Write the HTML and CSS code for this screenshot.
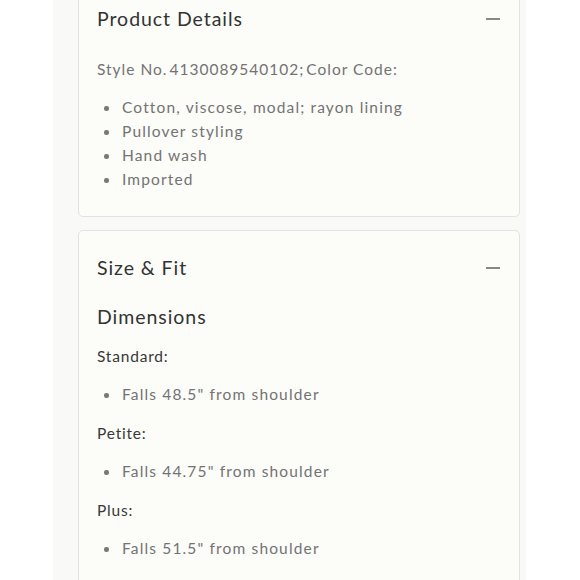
FILE: index.html
```html
<!DOCTYPE html>
<html>
<head>
<meta charset="utf-8">
<link rel="stylesheet" href="styles.css">
</head>
<body>
<div class="band">
  <section class="card first">
    <div class="card-head">
      <h2 class="title">Product Details</h2>
      <span class="minus"></span>
    </div>
    <p class="style-no">Style No.&#8202;4130089540102;&#8202;Color Code:</p>
    <ul class="bullets">
      <li>Cotton, viscose, modal; rayon lining</li>
      <li>Pullover styling</li>
      <li>Hand wash</li>
      <li>Imported</li>
    </ul>
  </section>
  <section class="card">
    <div class="card-head">
      <h2 class="title">Size &amp; Fit</h2>
      <span class="minus"></span>
    </div>
    <h3 class="subtitle">Dimensions</h3>
    <p class="label">Standard:</p>
    <ul class="bullets single">
      <li>Falls 48.5" from shoulder</li>
    </ul>
    <p class="label">Petite:</p>
    <ul class="bullets single">
      <li>Falls 44.75" from shoulder</li>
    </ul>
    <p class="label">Plus:</p>
    <ul class="bullets single">
      <li>Falls 51.5" from shoulder</li>
    </ul>
  </section>
</div>
</body>
</html>
```

FILE: styles.css
```css
html, body {
  margin: 0;
  padding: 0;
  background: #ffffff;
}

body {
  font-family: Lato, "Open Sans", sans-serif;
  height: 580px;
  overflow: hidden;
}

.band {
  margin-left: 53px;
  width: 473px;
  box-sizing: border-box;
  padding: 0 6px 40px 25px;
  background: #f9f9f7;
  min-height: 700px;
  display: flex;
  flex-direction: column;
  gap: 13px;
}

.card {
  background: #fcfcf9;
  border: 1px solid #e3e3de;
  border-radius: 5px;
  padding: 0 18px 25px 18px;
}

.card.first {
  margin-top: -19px;
}

.card-head {
  display: flex;
  align-items: center;
  justify-content: space-between;
  padding-top: 26px;
  height: 22px;
}

.title {
  margin: 0;
  font-size: 19.5px;
  font-weight: 400;
  letter-spacing: 0.95px;
  line-height: 22px;
  color: #333333;
}

.minus {
  display: block;
  width: 14px;
  height: 2px;
  background: #878787;
  margin-right: 1px;
}

.style-no {
  margin: 27px 0 0 0;
  font-size: 15.5px;
  line-height: 24px;
  letter-spacing: 1px;
  color: #737373;
}

.bullets {
  margin: 14px 0 0 0;
  padding: 0 0 0 25px;
  list-style: none;
}

.bullets li {
  position: relative;
  font-size: 15.5px;
  line-height: 24px;
  letter-spacing: 1.15px;
  color: #737373;
}

.bullets li::before {
  content: "";
  position: absolute;
  left: -18px;
  top: 11px;
  width: 4.5px;
  height: 4.5px;
  border-radius: 50%;
  background: #777777;
}

.subtitle {
  margin: 26px 0 0 0;
  font-size: 19.5px;
  font-weight: 400;
  letter-spacing: 0.95px;
  line-height: 24px;
  color: #333333;
}

.label {
  margin: 15px 0 0 0;
  font-size: 15.5px;
  line-height: 24px;
  letter-spacing: 0.8px;
  color: #383838;
}

.bullets.single {
  margin-top: 14px;
}
```
